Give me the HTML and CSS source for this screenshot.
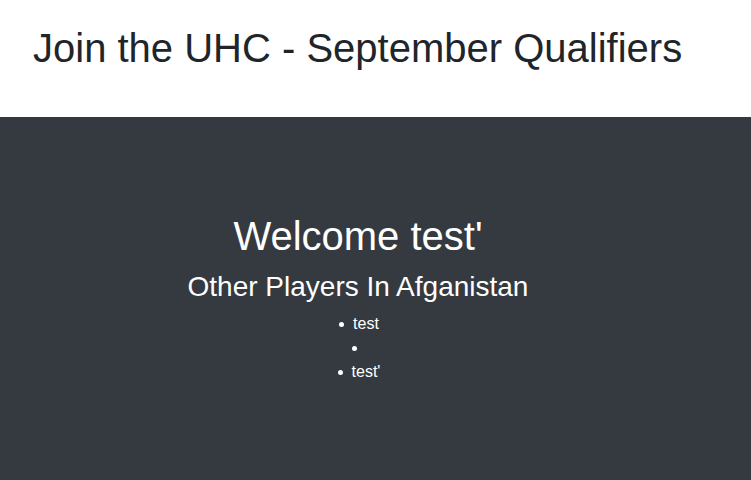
FILE: index.html
```html
<!DOCTYPE html>
<html>
<head>
<meta charset="utf-8">
<link rel="stylesheet" href="styles.css">
</head>
<body>
<header class="top">
  <h1 class="title">Join the UHC - September Qualifiers</h1>
</header>
<main class="panel">
  <div class="content">
    <h1 class="welcome">Welcome test'</h1>
    <h3 class="sub">Other Players In Afganistan</h3>
    <ul class="players">
      <li>test</li>
      <li></li>
      <li>test'</li>
    </ul>
  </div>
</main>
</body>
</html>
```
FILE: styles.css
```css
html, body {
  margin: 0;
  padding: 0;
}
body {
  font-family: "Liberation Sans", Arial, sans-serif;
  color: #212529;
  background: #343a40;
  min-height: 480px;
}
.top {
  background: #fff;
  height: 117px;
  padding: 0 33px;
  box-sizing: border-box;
}
.title {
  margin: 0;
  padding-top: 24px;
  font-size: 40px;
  font-weight: 400;
  line-height: 1.2;
}
.panel {
  background: #343a40;
  color: #fff;
  padding-top: 95px;
}
.content {
  width: 716px;
  text-align: center;
}
.welcome {
  margin: 0 0 10px;
  font-size: 40px;
  font-weight: 400;
  line-height: 1.2;
}
.sub {
  margin: 0 0 8px;
  font-size: 28px;
  font-weight: 400;
  line-height: 1.2;
}
.players {
  margin: 0;
  padding: 0 0 0 2px;
  list-style: none;
  font-size: 16px;
  line-height: 24px;
}
.players li::before {
  content: "";
  display: inline-block;
  width: 5px;
  height: 5px;
  border-radius: 50%;
  background: #fff;
  margin-right: 9px;
  vertical-align: middle;
}
```
